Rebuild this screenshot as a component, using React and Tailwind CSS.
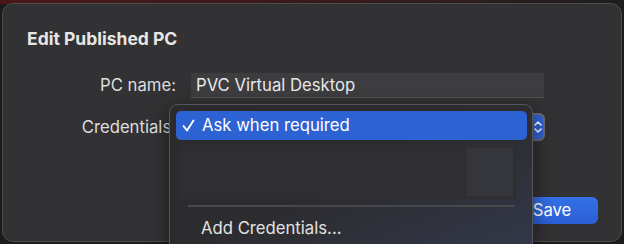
import React from "react";

export default function App() {
  const font = { fontFamily: "Inter, 'Noto Sans', sans-serif" };
  return (
    <div className="relative w-[624px] h-[244px] overflow-hidden bg-[#1b1b1c]" style={font}>
      <div className="absolute left-0 top-0 h-[4px] w-full bg-gradient-to-r from-[#4a1719] via-[#3a1a1b] to-[#1e1e1f]" />
      <div className="relative ml-[2px] mt-[3px] w-[620px] h-[239px] rounded-[11px] border border-[#4c4c4e] bg-[#323234] pl-[24px] pr-[24px] pt-[25px] flex flex-col">
        <div className="text-[17.5px] leading-[20px] font-bold text-[#e6e6e6]">Edit Published PC</div>
        <div className="mt-[24px] flex items-center gap-[15px]">
          <div className="w-[149px] text-right text-[16.7px] text-[#dedede]">PC name:</div>
          <div className="w-[353px] h-[25px] bg-[#3d3d3f] border-b border-[#545456] flex items-center pl-[5px] text-[16.7px] text-[#e8e8e8]">
            PVC Virtual Desktop
          </div>
        </div>
        <div className="mt-[15px] flex items-center gap-[15px]">
          <div className="w-[149px] text-right text-[16.7px] text-[#dedede] whitespace-nowrap">Credentials:</div>
          <div className="w-[354px] h-[28px] rounded-[6px] bg-[#4a4a4c] flex justify-end">
            <div className="w-[12px] h-[28px] rounded-r-[6px] border-2 border-l-0 border-[#6b6b6d] bg-[#2d62d3] flex items-center justify-center">
              <svg width="8" height="14" viewBox="0 0 8 14" fill="none" stroke="white" strokeWidth="1.6" strokeLinecap="round" strokeLinejoin="round">
                <path d="M1 5 L4 2 L7 5" />
                <path d="M1 9 L4 12 L7 9" />
              </svg>
            </div>
          </div>
        </div>
        <div className="mt-[56px] flex justify-end pr-[0px]">
          <div className="w-[92px] h-[27px] rounded-[6px] bg-gradient-to-b from-[#3470e6] to-[#2b5fd6] flex items-center justify-center text-[16.7px] text-white mr-[-1px]">
            Save
          </div>
        </div>
      </div>

      <div className="absolute left-[169px] top-[104px] w-[364px] h-[150px] rounded-[9px] border border-[#56565a] bg-gradient-to-br from-[#2b2b2d] via-[#2c2c2f] to-[#33384a] shadow-[0_6px_20px_rgba(0,0,0,0.5)]">
        <div className="ml-[6px] mr-[5px] mt-[6px] h-[29px] rounded-[5px] bg-[#2d62d3] flex items-center text-[16.7px] text-white">
          <svg className="ml-[6px] mr-[7px]" width="13" height="13" viewBox="0 0 13 13" fill="none" stroke="white" strokeWidth="1.9" strokeLinecap="round" strokeLinejoin="round">
            <path d="M1.5 7 L5 11.5 L11.5 1.5" />
          </svg>
          <span>Ask when required</span>
        </div>
        <div className="relative ml-[10px] mr-[16px] mt-[5px] h-[54px] bg-[#2f2f32] flex justify-end items-center pr-[3px]">
          <div className="w-[46px] h-[48px] bg-[#34363c]" />
        </div>
        <div className="ml-[18px] mr-[17px] mt-[6px] h-[2px] bg-[#48484b]" />
        <div className="mt-[11px] pl-[31px] text-[16.7px] leading-[20px] text-[#e2e2e2]">Add Credentials...</div>
      </div>
    </div>
  );
}
